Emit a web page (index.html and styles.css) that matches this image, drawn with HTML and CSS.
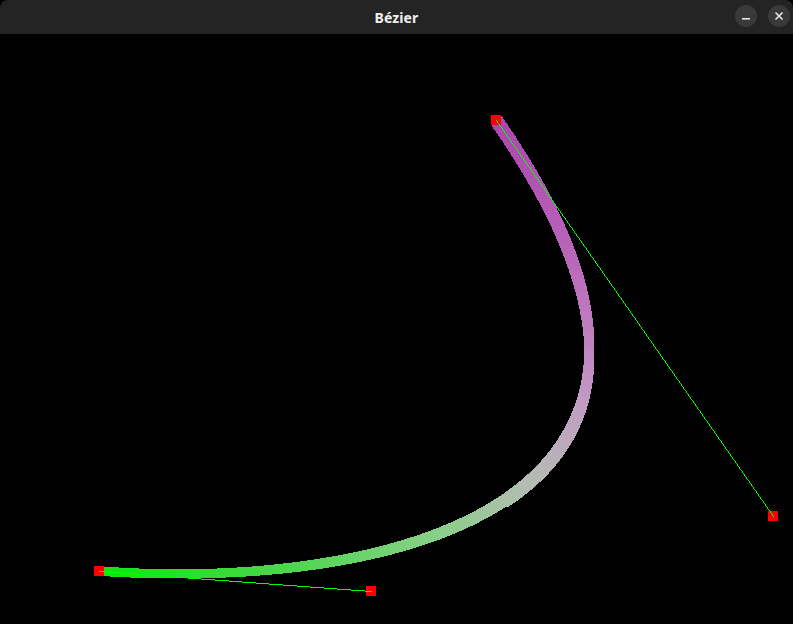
FILE: index.html
```html
<!DOCTYPE html>
<html>
<head>
<meta charset="utf-8">
<title>Bézier</title>
<link rel="stylesheet" href="styles.css">
</head>
<body>
<div class="window">
  <header class="titlebar">
    <div class="title">Bézier</div>
    <div class="controls">
      <button class="wbtn" aria-label="Minimize">
        <svg width="10" height="10" viewBox="0 0 10 10"><rect x="1" y="7" width="8" height="1.6" fill="#e6e6e6"/></svg>
      </button>
      <button class="wbtn" aria-label="Close">
        <svg width="10" height="10" viewBox="0 0 10 10"><path d="M1.5 1.5 L8.5 8.5 M8.5 1.5 L1.5 8.5" stroke="#e6e6e6" stroke-width="1.6" fill="none"/></svg>
      </button>
    </div>
  </header>
  <main class="stage">
    <canvas id="c" class="canvas" width="793" height="590"></canvas>
  </main>
</div>
<script src="script.js"></script>
</body>
</html>
```

FILE: styles.css
```css
html, body {
  margin: 0;
  padding: 0;
  background: #000;
  width: 793px;
  height: 624px;
  overflow: hidden;
}
.window {
  display: flex;
  flex-direction: column;
  width: 793px;
  height: 624px;
}
.titlebar {
  height: 34px;
  flex: 0 0 34px;
  background: #242424;
  display: flex;
  align-items: center;
  justify-content: center;
  position: relative;
  border-radius: 8px 8px 0 0;
}
.title {
  font-family: "Noto Sans", "Open Sans", sans-serif;
  font-weight: 700;
  font-size: 14px;
  color: #f0f0f0;
  letter-spacing: 0.1px;
}
.controls {
  position: absolute;
  right: 3px;
  top: 5px;
  display: flex;
  gap: 11px;
}
.wbtn {
  width: 22px;
  height: 22px;
  border-radius: 50%;
  border: none;
  padding: 0;
  background: #393939;
  display: flex;
  align-items: center;
  justify-content: center;
}
.stage {
  flex: 1;
  background: #000;
}
.canvas {
  display: block;
}
```

FILE: script.js
```js
(function () {
  var c = document.getElementById('c');
  var ctx = c.getContext('2d');
  ctx.fillStyle = '#000';
  ctx.fillRect(0, 0, c.width, c.height);
  var oy = 34;
  var P = [[99, 571 - oy], [371, 591 - oy], [773, 516 - oy], [496, 120 - oy]];
  var stops = [
    [0.0, [10, 232, 10]],
    [0.2, [70, 215, 70]],
    [0.4, [135, 208, 135]],
    [0.55, [180, 188, 180]],
    [0.7, [195, 155, 195]],
    [0.85, [188, 110, 188]],
    [1.0, [172, 70, 175]]
  ];
  function col(t) {
    for (var i = 0; i < stops.length - 1; i++) {
      var a = stops[i], b = stops[i + 1];
      if (t <= b[0]) {
        var u = (t - a[0]) / (b[0] - a[0]);
        var r = Math.round(a[1][0] + (b[1][0] - a[1][0]) * u);
        var g = Math.round(a[1][1] + (b[1][1] - a[1][1]) * u);
        var bl = Math.round(a[1][2] + (b[1][2] - a[1][2]) * u);
        return 'rgb(' + r + ',' + g + ',' + bl + ')';
      }
    }
    return 'rgb(172,70,175)';
  }
  function bez(t) {
    var m = 1 - t;
    var a = m * m * m, b = 3 * m * m * t, cc = 3 * m * t * t, d = t * t * t;
    return [a * P[0][0] + b * P[1][0] + cc * P[2][0] + d * P[3][0],
            a * P[0][1] + b * P[1][1] + cc * P[2][1] + d * P[3][1]];
  }
  var N = 3000;
  for (var i = 0; i <= N; i++) {
    var t = i / N;
    var p = bez(t);
    var w = 9 + t * 1;
    ctx.fillStyle = col(t);
    ctx.fillRect(Math.round(p[0] - w / 2), Math.round(p[1] - w / 2), Math.round(w), Math.round(w));
  }
  ctx.fillStyle = '#ff0000';
  P.forEach(function (p) {
    ctx.fillRect(p[0] - 5, p[1] - 5, 10, 10);
  });
  function line(x0, y0, x1, y1) {
    var dx = Math.abs(x1 - x0), sx = x0 < x1 ? 1 : -1;
    var dy = -Math.abs(y1 - y0), sy = y0 < y1 ? 1 : -1;
    var err = dx + dy;
    while (true) {
      ctx.fillRect(x0, y0, 1, 1);
      if (x0 === x1 && y0 === y1) break;
      var e2 = 2 * err;
      if (e2 >= dy) { err += dy; x0 += sx; }
      if (e2 <= dx) { err += dx; y0 += sy; }
    }
  }
  ctx.fillStyle = '#00ff00';
  line(P[0][0], P[0][1], P[1][0], P[1][1]);
  line(P[3][0], P[3][1], P[2][0], P[2][1]);
})();
```
